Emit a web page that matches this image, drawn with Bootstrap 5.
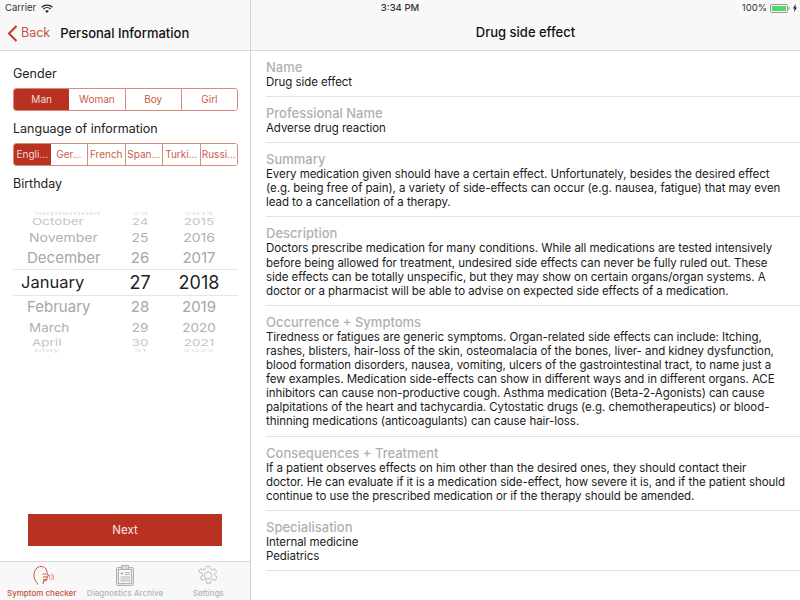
<!DOCTYPE html>
<html lang="en"><head><meta charset="utf-8"><title>Drug side effect</title>
<link href="https://cdn.jsdelivr.net/npm/bootstrap@5.3.0/dist/css/bootstrap.min.css" rel="stylesheet">
<style>
html,body{height:100%;margin:0;overflow:hidden}
body{font-family:Inter,"Liberation Sans",sans-serif;color:#1a1a1a;background:#fff;position:relative;font-size:12px}
.app-shell{height:600px;width:800px}
.side{width:251px;border-right:1px solid #d4d4d4}
.topbar{height:51px;background:#f8f8f8;border-bottom:1px solid #d9d9d9;padding-top:17px}
.back-link{color:#c8503f;font-size:12.500px;padding-left:7px;gap:3px}
.side-title{font-size:13px;font-weight:500;margin-left:10px;color:#111}
.form-area{padding:14px 12px 0 13px}
.field-label{font-size:12.5px;line-height:17px;color:#222;margin-bottom:6px}
.seg{width:225px;height:23px;margin-bottom:9px;display:flex;border:1px solid #d98a7e;border-radius:3px;overflow:hidden}
.seg-item{flex:1 1 0;min-width:0;padding:0;border:0;border-right:1px solid #d98a7e;border-radius:0;background:#fff;color:#cb5a4a;font-size:10px;line-height:21px;text-align:center;white-space:nowrap;overflow:hidden}
.seg-item:last-child{border-right:0}
.seg-item.on{background:#b93221;color:#f5dcd8;border-right:0}
.picker{margin:19px 0 0 -13px;width:250px;height:142px;overflow:hidden;position:relative}
.p-row{display:flex;align-items:center;white-space:nowrap;color:#aaa}
.p-d{width:56px;text-align:center}
.p-y{width:62px;text-align:center}
.p-row>span{display:block;transform-origin:center}
.p-row .p-m{flex:none}
.r0{height:6px;color:#ddd;font-size:13px;padding-left:34px}
.r0 .p-m{width:78px}
.r1{height:11px;color:#c4c4c4;font-size:13.5px;padding-left:32px}
.r1 .p-m{width:80px}
.r2{height:19px;color:#b0b0b0;font-size:14px;padding-left:29px}
.r2 .p-m{width:83px}
.r3{height:22px;color:#a6a6a6;font-size:15px;padding-left:27px}
.r3 .p-m{width:85px}
.r4{height:27px;color:#1f1f1f;font-size:16.500px;border-top:1px solid #e6e6e6;border-bottom:1px solid #e6e6e6;margin:0 12px 0 13px;padding-left:8px}
.r4 .p-m{width:91px}
.r4 .p-d,.r4 .p-y{font-size:18px}
.r5{height:22px;color:#a6a6a6;font-size:15px;padding-left:27px}
.r5 .p-m{width:85px}
.r6{height:20px;color:#b0b0b0;font-size:13.5px;padding-left:29px}
.r6 .p-m{width:83px}
.r7{height:10px;color:#c4c4c4;font-size:13.5px;padding-left:32px}
.r7 .p-m{width:80px}
.r8{height:6px;color:#e0e0e0;font-size:13px;padding-left:34px}
.r8 .p-m{width:78px}
.r1 span,.r7 span{transform:scaleY(.68)}
.r2 span,.r6 span{transform:scaleY(.85)}
.r0 span,.r8 span{transform:scaleY(.3)}
.next-btn{width:194px;height:32px;background:#b93221;color:#f7e6e3;font-size:11.5px;border:0;border-radius:0;padding:2px 0 0;margin:0 auto 15px;display:block}
.next-btn:hover{background:#b93221;color:#f7e6e3}
.tabs{height:39px;background:#f8f8f8;border-top:1px solid #d9d9d9}
.tab-item{flex:1 1 0;min-width:0;font-size:8px;font-weight:500;color:#b3b3b3;line-height:10px;white-space:nowrap;padding-top:3px}
.tab-item.on{color:#c8503f}
.tab-item svg{display:block;margin-bottom:2px}
.main-title{font-size:13px;font-weight:500;color:#111;text-align:center;line-height:30px}
.info-block{margin-left:15px;padding:8px 0 7px;border-bottom:1px solid #e2e2e2}
.info-label{font-size:13px;line-height:16px;color:#b0b0b0;font-weight:500}
.info-text{font-size:11.5px;letter-spacing:-.06px;line-height:14.1px;color:#1a1a1a;padding-right:14px}
.status{position:absolute;left:0;top:0;width:800px;height:17px;font-size:9.5px;color:#333}
.st-time{position:absolute;left:0;right:0;top:1px;text-align:center;font-weight:500}
.st-left{position:absolute;left:5px;top:1px;display:flex;align-items:center;gap:5px}
.st-right{position:absolute;right:3px;top:1px;display:flex;align-items:center;gap:3px}
</style></head><body>
<div class="app-shell d-flex">
 <aside class="side d-flex flex-column">
  <div class="topbar d-flex align-items-center">
   <span class="back-link d-flex align-items-center"><svg width="11" height="17" viewBox="0 0 11 17"><path d="M9.500 1 2 8.500 9.500 16" fill="none" stroke="#c0392b" stroke-width="2"/></svg>Back</span>
   <span class="side-title">Personal Information</span>
  </div>
  <div class="form-area flex-grow-1">
   <div class="field-label">Gender</div>
   <div class="seg"><div class="seg-item on">Man</div><div class="seg-item">Woman</div><div class="seg-item">Boy</div><div class="seg-item">Girl</div></div>
   <div class="field-label">Language of information</div>
   <div class="seg"><div class="seg-item on">Engli...</div><div class="seg-item">Ger...</div><div class="seg-item">French</div><div class="seg-item">Span...</div><div class="seg-item">Turki...</div><div class="seg-item">Russi...</div></div>
   <div class="field-label">Birthday</div>
   <div class="picker">
    <div class="p-row r0"><span class="p-m">September</span><span class="p-d">23</span><span class="p-y">2014</span></div>
    <div class="p-row r1"><span class="p-m">October</span><span class="p-d">24</span><span class="p-y">2015</span></div>
    <div class="p-row r2"><span class="p-m">November</span><span class="p-d">25</span><span class="p-y">2016</span></div>
    <div class="p-row r3"><span class="p-m">December</span><span class="p-d">26</span><span class="p-y">2017</span></div>
    <div class="p-row r4"><span class="p-m">January</span><span class="p-d">27</span><span class="p-y">2018</span></div>
    <div class="p-row r5"><span class="p-m">February</span><span class="p-d">28</span><span class="p-y">2019</span></div>
    <div class="p-row r6"><span class="p-m">March</span><span class="p-d">29</span><span class="p-y">2020</span></div>
    <div class="p-row r7"><span class="p-m">April</span><span class="p-d">30</span><span class="p-y">2021</span></div>
    <div class="p-row r8"><span class="p-m">May</span><span class="p-d">31</span><span class="p-y">2022</span></div>
   </div>
  </div>
  <button class="btn next-btn" type="button">Next</button>
  <nav class="tabs d-flex">
   <div class="tab-item on d-flex flex-column align-items-center"><svg width="24" height="21" viewBox="0 0 24 21" fill="none" stroke="#c8503f" stroke-width="1"><path d="M7.500 19.500c0-2.500-3.500-3.500-3.500-9C4 5 7 1.500 11 1.500c3.500 0 6 2.500 6 6l1.500 3.500-1.500.5v2.500c0 1.500-1 2-3.500 1.800l-.5 3.200"/><path d="M12.500 9.500c1.500-.8 3-.8 4 0M13 12h3.500M13 14.500c1.500.3 2.500.3 3.500-.5"/><path d="M19.500 10.500l2.500-1.500v6l-2.500-1.500zM23.500 9.500v5" stroke="#e6a89f"/></svg>Symptom checker</div>
   <div class="tab-item d-flex flex-column align-items-center"><svg width="20" height="21" viewBox="0 0 20 21" fill="none" stroke="#b3b3b3" stroke-width="1"><rect x="1.500" y="2.500" width="17" height="18" rx="1" fill="#e4e4e4"/><rect x="3.500" y="4.500" width="13" height="14" fill="#f8f8f8"/><rect x="6.500" y=".5" width="7" height="4" fill="#d8d8d8"/><path d="M7 7v3M5.500 8.500h3M10 7.500h5M10 9.500h5M5.500 12h9.500M5.500 14h9.500M5.500 16h9.500"/></svg>Diagnostics Archive</div>
   <div class="tab-item d-flex flex-column align-items-center"><svg width="22" height="21" viewBox="0 0 24 24" fill="none" stroke="#b3b3b3" stroke-width="1"><path d="M10 1.500h4l.7 3.200 2 1 3-1.500 2.300 3.600-2.500 2 .2 2.200 2.600 1.900-2 3.500-3.100-1-1.800 1.200-.7 3.300h-4l-.7-3.300-1.800-1.200-3.100 1-2-3.500 2.600-1.900.2-2.200L1.300 7.800 3.600 4.200l3 1.500 2-1z"/><circle cx="12" cy="12" r="4.200"/></svg>Settings</div>
  </nav>
 </aside>
 <main class="flex-grow-1" style="min-width:0">
  <div class="topbar"><div class="main-title">Drug side effect</div></div>
  <section class="info-block"><div class="info-label">Name</div><div class="info-text">Drug side effect</div></section>
  <section class="info-block"><div class="info-label">Professional Name</div><div class="info-text">Adverse drug reaction</div></section>
  <section class="info-block"><div class="info-label">Summary</div><div class="info-text">Every medication given should have a certain effect. Unfortunately, besides the desired effect (e.g. being free of pain), a variety of side-effects can occur (e.g. nausea, fatigue) that may even lead to a cancellation of a therapy.</div></section>
  <section class="info-block"><div class="info-label">Description</div><div class="info-text">Doctors prescribe medication for many conditions. While all medications are tested intensively before being allowed for treatment, undesired side effects can never be fully ruled out. These side effects can be totally unspecific, but they may show on certain organs/organ systems. A doctor or a pharmacist will be able to advise on expected side effects of a medication.</div></section>
  <section class="info-block"><div class="info-label">Occurrence + Symptoms</div><div class="info-text">Tiredness or fatigues are generic symptoms. Organ-related side effects can include: Itching, rashes, blisters, hair-loss of the skin, osteomalacia of the bones, liver- and kidney dysfunction, blood formation disorders, nausea, vomiting, ulcers of the gastrointestinal tract, to name just a few examples. Medication side-effects can show in different ways and in different organs. ACE inhibitors can cause non-productive cough. Asthma medication (Beta-2-Agonists) can cause palpitations of the heart and tachycardia. Cytostatic drugs (e.g. chemotherapeutics) or blood-thinning medications (anticoagulants) can cause hair-loss.</div></section>
  <section class="info-block"><div class="info-label">Consequences + Treatment</div><div class="info-text">If a patient observes effects on him other than the desired ones, they should contact their doctor. He can evaluate if it is a medication side-effect, how severe it is, and if the patient should continue to use the prescribed medication or if the therapy should be amended.</div></section>
  <section class="info-block"><div class="info-label">Specialisation</div><div class="info-text">Internal medicine<br>Pediatrics</div></section>
 </main>
</div>
<div class="status">
 <div class="st-left">Carrier<svg width="12" height="9" viewBox="0 0 12 9" fill="none" stroke="#222" stroke-width="1.300"><path d="M.6 3.200c3-2.800 7.800-2.800 10.800 0M2.400 5c2-1.800 5.200-1.800 7.200 0"/><path d="M6 9 4 6.800c1.200-.9 2.800-.9 4 0z" fill="#222" stroke="none"/></svg></div>
 <div class="st-time">3:34 PM</div>
 <div class="st-right">100%<svg width="20" height="9" viewBox="0 0 20 9"><rect x=".5" y=".5" width="17" height="8" rx="1.500" fill="none" stroke="#999"/><rect x="2" y="2" width="14" height="5" fill="#4cd964"/><rect x="18.500" y="3" width="1" height="3" fill="#999"/></svg><svg width="4" height="8" viewBox="0 0 4 8"><path d="M2.500 0 0 4.500h1.500L1 8l3-4.500H2.500z" fill="#222"/></svg></div>
</div>
</body></html>
